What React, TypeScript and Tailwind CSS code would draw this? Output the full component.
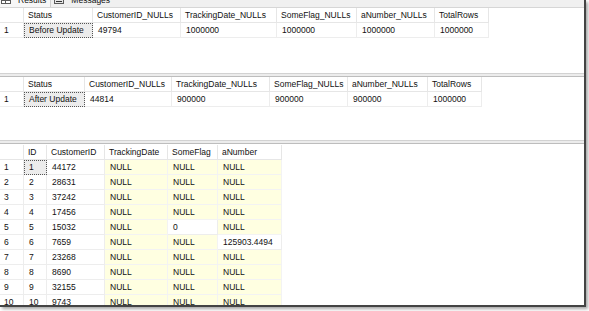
import React from "react";

type Col = { name: string; w: string };

const grid1: Col[] = [
  { name: "Status", w: "w-[69px]" },
  { name: "CustomerID_NULLs", w: "w-[88px]" },
  { name: "TrackingDate_NULLs", w: "w-[96px]" },
  { name: "SomeFlag_NULLs", w: "w-[80px]" },
  { name: "aNumber_NULLs", w: "w-[78px]" },
  { name: "TotalRows", w: "w-[54px]" },
];

const grid2: Col[] = [
  { name: "Status", w: "w-[61px]" },
  { name: "CustomerID_NULLs", w: "w-[87px]" },
  { name: "TrackingDate_NULLs", w: "w-[98px]" },
  { name: "SomeFlag_NULLs", w: "w-[78px]" },
  { name: "aNumber_NULLs", w: "w-[80px]" },
  { name: "TotalRows", w: "w-[54px]" },
];

const grid3: Col[] = [
  { name: "ID", w: "w-[23px]" },
  { name: "CustomerID", w: "w-[58px]" },
  { name: "TrackingDate", w: "w-[63px]" },
  { name: "SomeFlag", w: "w-[50px]" },
  { name: "aNumber", w: "w-[64px]" },
];

const rows3: (string | null)[][] = [
  ["1", "44172", null, null, null],
  ["2", "28631", null, null, null],
  ["3", "37242", null, null, null],
  ["4", "17456", null, null, null],
  ["5", "15032", null, "0", null],
  ["6", "7659", null, null, "125903.4494"],
  ["7", "23268", null, null, null],
  ["8", "8690", null, null, null],
  ["9", "32155", null, null, null],
  ["10", "9743", null, null, null],
];

function Splitter() {
  return (
    <div className="shrink-0">
      <div className="h-px bg-[#d2d2d2]" />
      <div className="h-[2px] bg-[#ececec]" />
      <div className="h-px bg-[#bdbdbd]" />
    </div>
  );
}

function Grid({ cols, rows }: { cols: Col[]; rows: (string | null)[][] }) {
  return (
    <div className="flex flex-col">
      {/* header */}
      <div className="flex h-[15px] leading-[14px]">
        <div className="w-[24px] shrink-0 border-r border-b border-[#e6e6e6]" />
        {cols.map((c) => (
          <div key={c.name} className={`${c.w} shrink-0 pl-[4px] border-r border-b border-[#e6e6e6] whitespace-nowrap overflow-hidden`}>
            {c.name}
          </div>
        ))}
      </div>
      {rows.map((r, i) => (
        <div key={i} className="flex h-[15px] leading-[14px]">
          <div className="w-[24px] shrink-0 pl-[4px] border-r border-b border-[#ededed]">{i + 1}</div>
          {r.map((v, j) => {
            const selected = i === 0 && j === 0;
            const isNull = v === null;
            return (
              <div
                key={j}
                className={`${cols[j].w} shrink-0 whitespace-nowrap overflow-hidden border-r border-b ${
                  selected
                    ? "bg-[#ececec] border border-dotted border-[#555] pl-[4px] leading-[12px]"
                    : isNull
                    ? "bg-[#ffffe1] border-[#f3f3f3] pl-[5px]"
                    : "bg-white border-[#ededed] pl-[5px]"
                }`}
              >
                {isNull ? "NULL" : v}
              </div>
            );
          })}
        </div>
      ))}
    </div>
  );
}

export default function App() {
  return (
    <div className="w-[589px] h-[311px] bg-white overflow-hidden text-[8.5px] text-[#111] font-['Liberation_Sans',Arial,sans-serif]">
      <div className="w-[586px] h-[307px] bg-white border-r-2 border-b-2 border-[#444] shadow-[2px_2px_3px_rgba(0,0,0,0.35)] flex flex-col overflow-hidden">
        {/* tab strip, cut off at the top */}
        <div className="h-[8px] shrink-0 overflow-hidden bg-[#f0f0f0] border-b border-[#d6d6d6] flex items-end">
          <div className="flex items-end h-[16px] mb-[-1px]">
            <div className="flex items-end gap-[7px] pl-[1px] pr-[4px] h-[16px] bg-[#f7f7f7] border-r border-[#cfcfcf]">
              <svg width="10" height="10" viewBox="0 0 10 10" className="mb-[4px]">
                <rect x="0.5" y="0.5" width="9" height="9" fill="#fff" stroke="#5a5a5a" />
                <line x1="0.5" y1="6.5" x2="9.5" y2="6.5" stroke="#5a5a5a" />
                <line x1="4.5" y1="0.5" x2="4.5" y2="9.5" stroke="#5a5a5a" />
              </svg>
              <span className="leading-[13px] pb-[1px]">Results</span>
            </div>
            <div className="flex items-end gap-[7px] pl-[3px] pr-[4px] h-[16px]">
              <svg width="10" height="10" viewBox="0 0 10 10" className="mb-[4px]">
                <rect x="0.5" y="0.5" width="9" height="9" fill="#e6e6e6" stroke="#5a5a5a" />
                <line x1="2" y1="5.5" x2="8" y2="5.5" stroke="#333" />
                <line x1="2" y1="7.5" x2="8" y2="7.5" stroke="#333" />
              </svg>
              <span className="leading-[13px] pb-[1px]">Messages</span>
            </div>
          </div>
        </div>

        <div className="h-[65px] shrink-0">
          <Grid cols={grid1} rows={[["Before Update", "49794", "1000000", "1000000", "1000000", "1000000"]]} />
        </div>
        <Splitter />
        <div className="h-[63px] shrink-0">
          <Grid cols={grid2} rows={[["After Update", "44814", "900000", "900000", "900000", "1000000"]]} />
        </div>
        <Splitter />
        <div className="flex-1 pt-px overflow-hidden">
          <Grid cols={grid3} rows={rows3} />
        </div>
      </div>
    </div>
  );
}
